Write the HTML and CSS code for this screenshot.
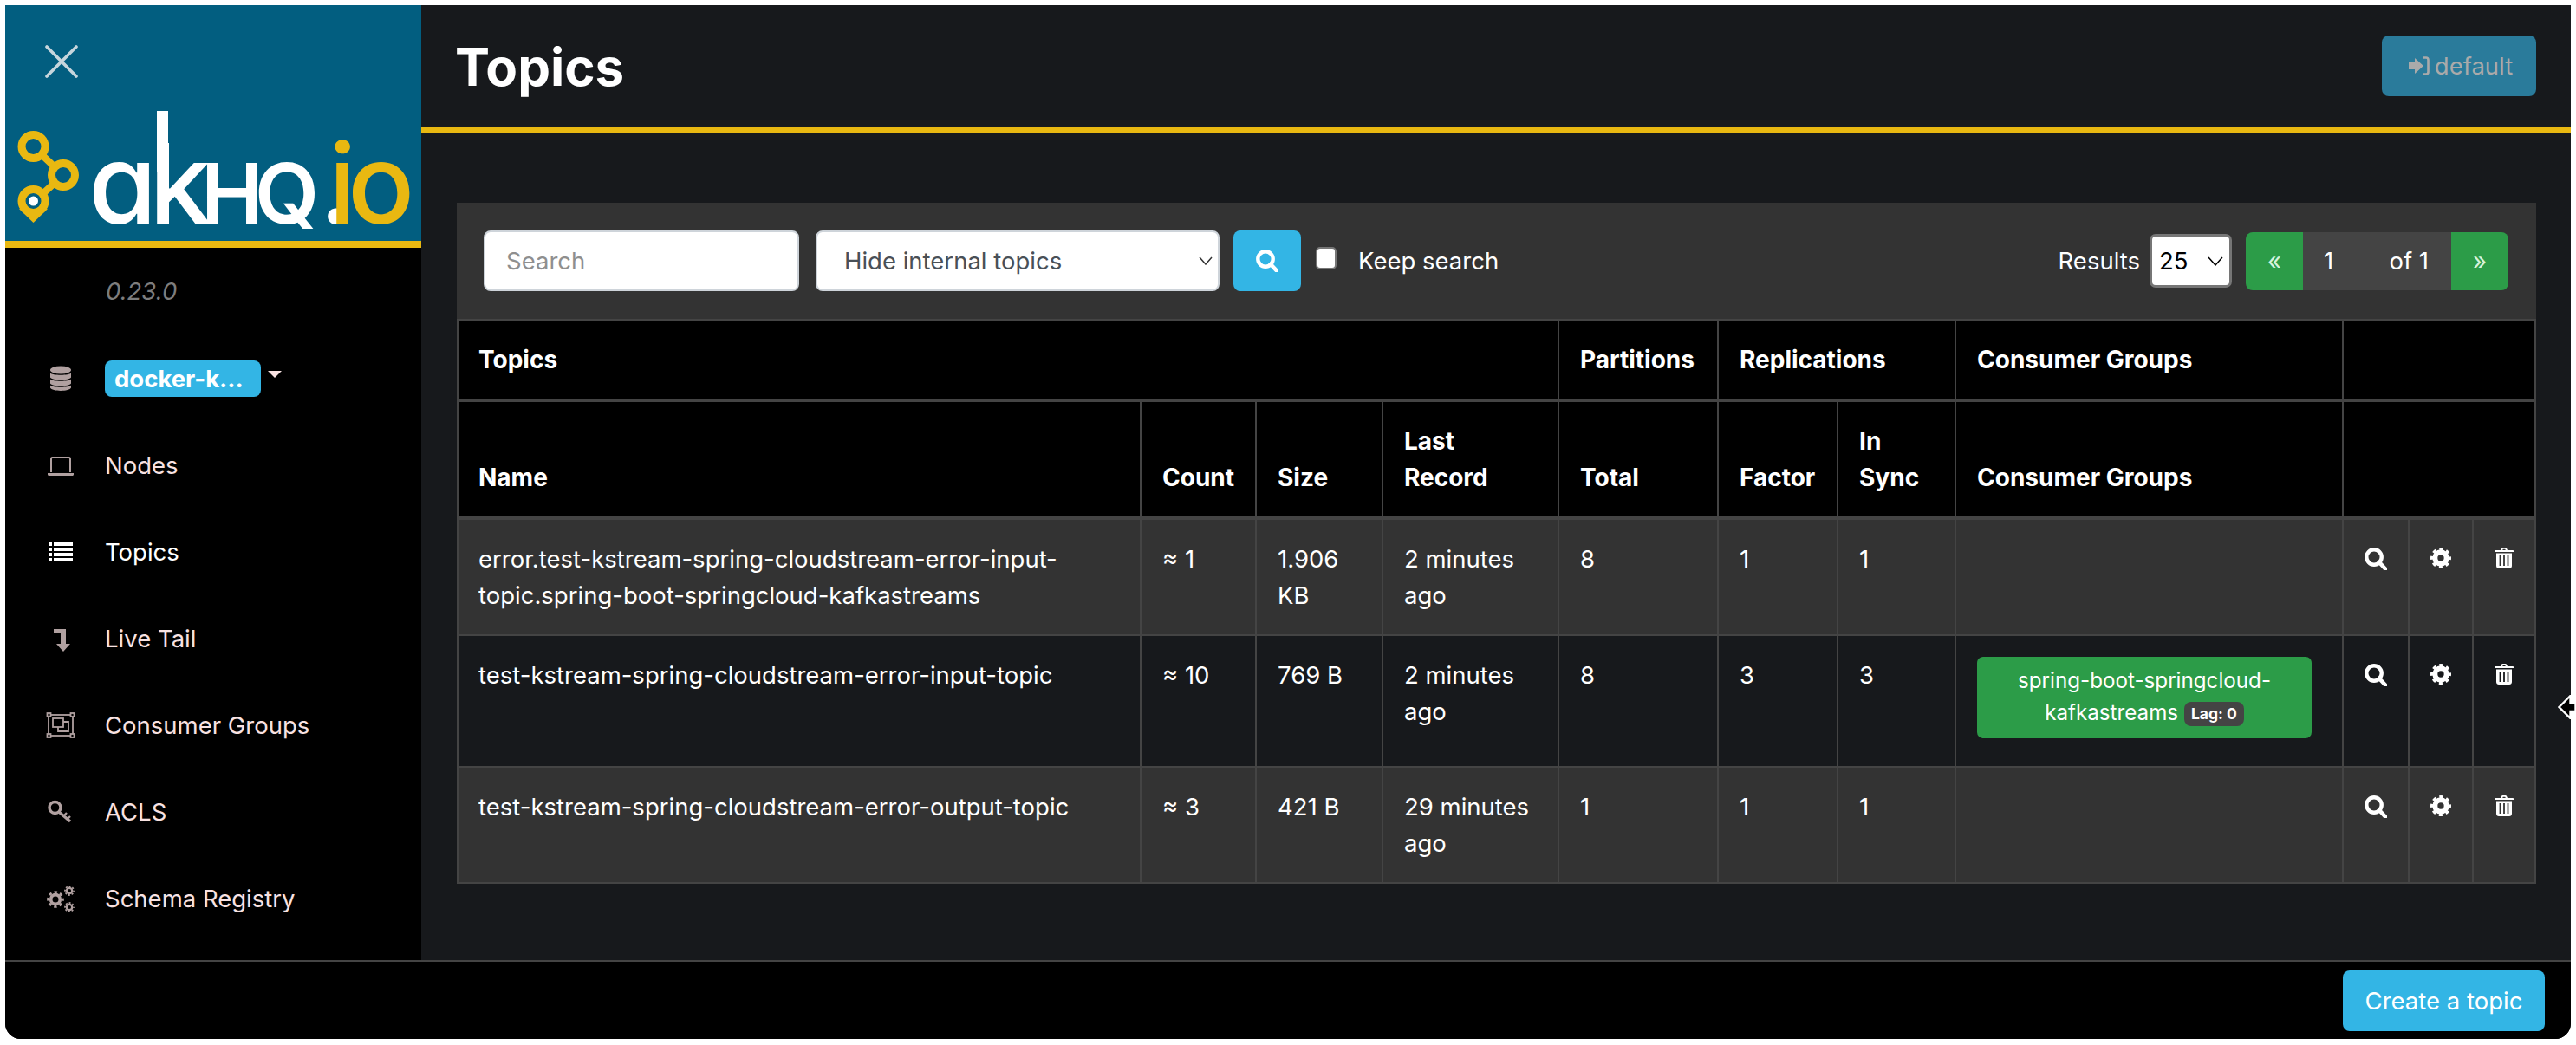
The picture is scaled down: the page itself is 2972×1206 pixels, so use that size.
FILE: index.html
```html
<!DOCTYPE html>
<html lang="en">
<head>
<meta charset="utf-8">
<title>Topics</title>
<link rel="stylesheet" href="styles.css">
</head>
<body>
<svg class="defs" width="0" height="0" aria-hidden="true">
  <symbol id="i-search" viewBox="0 0 26 26"><circle cx="11" cy="11" r="8.7" fill="none" stroke="currentColor" stroke-width="4.4"/><path d="M17 17l7 7.5" fill="none" stroke="currentColor" stroke-width="4.6" stroke-linecap="round"/></symbol>
  <symbol id="i-cog" viewBox="0 0 24 24"><circle cx="12" cy="12" r="6.7" fill="none" stroke="currentColor" stroke-width="6"/><circle cx="12" cy="12" r="10.2" fill="none" stroke="currentColor" stroke-width="3.6" stroke-dasharray="4 4.01" stroke-dashoffset="2"/></symbol>
  <symbol id="i-trash" viewBox="0 0 22 24"><path fill="currentColor" fill-rule="evenodd" d="M7 3l1.2-2.4C8.5.2 9 0 9.4 0h3.2c.4 0 .9.2 1.2.6L15 3h6c.6 0 1 .4 1 1v1H0V4c0-.6.4-1 1-1h6zm2.2 0h3.6l-.6-1.3H9.8L9.2 3zM2 6.500h18V21c0 1.700-1.300 3-3 3H5c-1.700 0-3-1.300-3-3V6.500zM5.600 9v12h1.800V9H5.600zm4.500 0v12h1.800V9h-1.800zm4.500 0v12h1.800V9h-1.800z"/></symbol>
  <symbol id="i-cog-s" viewBox="0 0 12 12"><circle cx="6" cy="6" r="3.2" fill="none" stroke="currentColor" stroke-width="2.200"/><circle cx="6" cy="6" r="5" fill="none" stroke="currentColor" stroke-width="1.800" stroke-dasharray="2 1.930" stroke-dashoffset="1"/></symbol>
</svg>
<div class="app">
  <div class="top">
    <aside class="sidebar">
      <div class="brand">
        <svg class="close" viewBox="0 0 38 38" aria-hidden="true"><path d="M2 2l34 34M36 2L2 36"/></svg>
        <svg class="logo" viewBox="0 -92 480 272" role="img" aria-label="akhq.io">
          <path d="M32 71l35 33M67 104L32 136" fill="none" stroke="#e9b811" stroke-width="8"/>
          <path fill="#e9b811" d="M16 143l16.500 16 16.500-16z"/>
          <g fill="#025e80" stroke="#e9b811" stroke-width="9">
            <circle cx="32.500" cy="71" r="13.500"/>
            <circle cx="67" cy="104" r="13.500"/>
            <circle cx="32.500" cy="134" r="13.500"/>
          </g>
          <circle cx="32.500" cy="134" r="5.500" fill="#fff"/>
          <rect x="175" y="30" width="13" height="70" fill="#fff"/>
          <text class="wordmark" y="160" x="96 166 226 288 362 373 395"><tspan class="wm-low">ak</tspan><tspan class="wm-cap">HQ</tspan><tspan class="wm-low">.</tspan><tspan class="wm-low wm-io">io</tspan></text>
        </svg>
      </div>
      <div class="version">0.23.0</div>
      <nav class="nav">
        <div class="nav-item nav-cluster">
          <svg class="nav-icon" viewBox="0 0 34 34" aria-hidden="true"><g fill="currentColor"><ellipse cx="17" cy="7" rx="12" ry="4.500"/><path d="M5 10.500c2 3 22 3 24 0v5c-2 4-22 4-24 0zM5 17.500c2 3 22 3 24 0v5c-2 4-22 4-24 0zM5 24.500c2 3 22 3 24 0v3c-2 4.500-22 4.500-24 0z"/></g></svg>
          <span class="cluster-badge">docker-k...</span>
          <span class="caret"></span>
        </div>
        <div class="nav-item">
          <svg class="nav-icon" viewBox="0 0 34 34" aria-hidden="true"><path fill="none" stroke="currentColor" stroke-width="2" d="M6 25V9.500C6 8.700 6.700 8 7.500 8h19c.8 0 1.500.7 1.500 1.500V25"/><path fill="currentColor" d="M2 26h30v1.500c0 .8-.7 1.500-1.500 1.500h-27C2.700 29 2 28.300 2 27.500z"/></svg>
          <span>Nodes</span>
        </div>
        <div class="nav-item nav-active">
          <svg class="nav-icon" viewBox="0 0 34 34" aria-hidden="true"><path fill="currentColor" d="M3 6h4v4H3zM9 6h22v4H9zM3 12h4v4H3zM9 12h22v4H9zM3 18h4v4H3zM9 18h22v4H9zM3 24h4v4H3zM9 24h22v4H9z"/></svg>
          <span>Topics</span>
        </div>
        <div class="nav-item">
          <svg class="nav-icon" viewBox="0 0 34 34" aria-hidden="true"><path fill="currentColor" d="M9 6h14v17h5l-8 9-8-9h5V10H9z"/></svg>
          <span>Live Tail</span>
        </div>
        <div class="nav-item">
          <svg class="nav-icon" viewBox="0 0 34 34" aria-hidden="true"><g fill="none" stroke="currentColor" stroke-width="1.800"><rect x="3" y="5" width="28" height="24"/><rect x="1.500" y="3" width="4" height="4" fill="#000"/><rect x="28.500" y="3" width="4" height="4" fill="#000"/><rect x="1.500" y="27" width="4" height="4" fill="#000"/><rect x="28.500" y="27" width="4" height="4" fill="#000"/><rect x="8" y="9" width="12" height="10"/><path d="M20 13h6v11H14v-5"/></g></svg>
          <span>Consumer Groups</span>
        </div>
        <div class="nav-item">
          <svg class="nav-icon" viewBox="0 0 34 34" aria-hidden="true"><circle cx="10.500" cy="12" r="6.500" fill="none" stroke="currentColor" stroke-width="3.400"/><path fill="none" stroke="currentColor" stroke-width="3.400" d="M15 17l13 11"/><path fill="none" stroke="currentColor" stroke-width="2.400" d="M21 21l3-3M25 25l3-3"/></svg>
          <span>ACLS</span>
        </div>
        <div class="nav-item">
          <svg class="nav-icon" viewBox="0 0 34 34" aria-hidden="true"><use href="#i-cog-s" x="1" y="8" width="20" height="20"/><use href="#i-cog-s" x="21" y="2" width="12" height="12"/><use href="#i-cog-s" x="21" y="21" width="12" height="12"/></svg>
          <span>Schema Registry</span>
        </div>
      </nav>
    </aside>
    <main class="main">
      <header class="page-header">
        <h1>Topics</h1>
        <button class="btn-default" type="button">
          <svg class="signin" viewBox="0 0 24 22" aria-hidden="true"><path fill="currentColor" d="M0 7h7V2l10 9-10 9v-5H0z"/><path fill="none" stroke="currentColor" stroke-width="2.600" d="M16 1.500h4c1.500 0 2.500 1 2.500 2.500v14c0 1.500-1 2.500-2.500 2.500h-4"/></svg>
          default
        </button>
      </header>
      <section class="content">
        <div class="toolbar">
          <input class="input-search" type="text" placeholder="Search">
          <select class="select-filter"><option>Hide internal topics</option></select>
          <button class="btn-search" type="button" aria-label="Search"><svg class="icon-search"><use href="#i-search"/></svg></button>
          <input class="check" type="checkbox">
          <span class="check-label">Keep search</span>
          <div class="toolbar-right">
            <span class="results-label">Results</span>
            <select class="select-results"><option>25</option></select>
            <div class="pager">
              <span class="pager-btn">«</span>
              <span class="pager-mid"><span>1</span><span>of 1</span></span>
              <span class="pager-btn">»</span>
            </div>
          </div>
        </div>
        <table class="topics">
          <colgroup>
            <col class="c-name"><col class="c-count"><col class="c-size"><col class="c-last"><col class="c-total"><col class="c-factor"><col class="c-sync"><col class="c-cg"><col class="c-a1"><col class="c-a2"><col class="c-a3">
          </colgroup>
          <thead>
            <tr><th colspan="4">Topics</th><th>Partitions</th><th colspan="2">Replications</th><th>Consumer Groups</th><th colspan="3"></th></tr>
            <tr><th>Name</th><th>Count</th><th>Size</th><th>Last Record</th><th>Total</th><th>Factor</th><th>In Sync</th><th>Consumer Groups</th><th colspan="3"></th></tr>
          </thead>
          <tbody>
            <tr>
              <td>error.test-kstream-spring-cloudstream-error-input-topic.spring-boot-springcloud-kafkastreams</td><td>≈ 1</td><td>1.906 KB</td><td>2 minutes ago</td><td>8</td><td>1</td><td>1</td><td></td>
              <td class="act"><svg class="ico-s"><use href="#i-search"/></svg></td><td class="act"><svg class="ico-c"><use href="#i-cog"/></svg></td><td class="act"><svg class="ico-t"><use href="#i-trash"/></svg></td>
            </tr>
            <tr>
              <td>test-kstream-spring-cloudstream-error-input-topic</td><td>≈ 10</td><td>769 B</td><td>2 minutes ago</td><td>8</td><td>3</td><td>3</td>
              <td><a class="cg-btn">spring-boot-springcloud-kafkastreams <span class="lag">Lag: 0</span></a></td>
              <td class="act"><svg class="ico-s"><use href="#i-search"/></svg></td><td class="act"><svg class="ico-c"><use href="#i-cog"/></svg></td><td class="act"><svg class="ico-t"><use href="#i-trash"/></svg></td>
            </tr>
            <tr>
              <td>test-kstream-spring-cloudstream-error-output-topic</td><td>≈ 3</td><td>421 B</td><td>29 minutes ago</td><td>1</td><td>1</td><td>1</td><td></td>
              <td class="act"><svg class="ico-s"><use href="#i-search"/></svg></td><td class="act"><svg class="ico-c"><use href="#i-cog"/></svg></td><td class="act"><svg class="ico-t"><use href="#i-trash"/></svg></td>
            </tr>
          </tbody>
        </table>
      </section>
    </main>
  </div>
  <footer class="footer">
    <button class="btn-create" type="button">Create a topic</button>
  </footer>
</div>
<svg class="cursor" viewBox="0 0 20 28" aria-hidden="true"><path d="M1 14L14 1v8h6v10h-6v8z" fill="#000" stroke="#fff" stroke-width="2.400"/></svg>
</body>
</html>
```
FILE: styles.css
```css
* { box-sizing: border-box; }
html, body { margin: 0; height: 100%; }
body {
  background: #fff;
  padding: 6px 6px 7px;
  font-family: "Inter", "Liberation Sans", sans-serif;
  font-size: 27.5px;
  line-height: 42px;
  color: #fff;
  overflow: hidden;
  position: relative;
}
.defs { position: absolute; }
.app {
  height: 1193px;
  display: flex;
  flex-direction: column;
  background: #000;
  border-radius: 0 0 18px 18px;
  overflow: hidden;
}
.top { flex: 1; display: flex; min-height: 0; }

/* sidebar */
.sidebar { width: 480px; flex: none; background: #000; }
.brand {
  height: 280px;
  background: #025e80;
  border-bottom: 8px solid #e9b811;
  padding: 46px 0 0 46px;
  position: relative;
}
.close { display: block; width: 38px; height: 38px; position: relative; z-index: 1; }
.close path { fill: none; stroke: #c6d6dd; stroke-width: 3.6; stroke-linecap: round; }
.logo { position: absolute; left: 0; top: 0; width: 480px; height: 272px; }
.wordmark { font-family: "Inter", sans-serif; font-feature-settings: "cv11"; fill: #fff; font-weight: 500; }
.wm-low { font-size: 128px; }
.wm-cap { font-size: 96px; font-weight: 600; }
.wm-io { fill: #e9b811; }
.version {
  height: 101px;
  padding: 29px 0 0 116px;
  font-style: italic;
  color: #7d7d7d;
}
.nav-item {
  height: 100px;
  display: flex;
  align-items: center;
  padding-left: 47px;
  padding-bottom: 1px;
  color: #f8e2e2;
}
.nav-icon { width: 34px; height: 34px; margin-right: 34px; color: #b0a0a0; flex: none; }
.nav-active, .nav-active .nav-icon { color: #fff; }
.nav-cluster { padding-bottom: 0; }
.cluster-badge {
  width: 180px;
  height: 42px;
  background: #33b5e5;
  border-radius: 8px;
  color: #fff;
  font-weight: 700;
  padding-left: 11px;
  line-height: 42px;
}
.caret {
  margin: -10px 0 0 8px;
  border-top: 8px solid #f8e2e2;
  border-left: 8px solid transparent;
  border-right: 8px solid transparent;
}

/* main */
.main { flex: 1; min-width: 0; background: #17191c; display: flex; flex-direction: column; }
.page-header {
  height: 148px;
  flex: none;
  border-bottom: 8px solid #e9b811;
  display: flex;
  justify-content: space-between;
  padding: 35px 40px 0 39px;
}
.page-header h1 { margin: 0; font-size: 60px; line-height: 72px; font-weight: 700; }
.btn-default {
  width: 178px;
  height: 70px;
  border: 0;
  border-radius: 8px;
  background: #2a7b9b;
  color: #aaa;
  font: inherit;
  display: flex;
  align-items: center;
  justify-content: center;
  gap: 6px;
  padding: 0 0 0 4px;
}
.signin { width: 24px; height: 22px; }
.content { padding: 80px 40px 0 41px; }
.toolbar {
  height: 134px;
  background: #333;
  display: flex;
  align-items: center;
  padding: 0 32px 0 31px;
}
.input-search {
  width: 364px;
  height: 70px;
  border: 2px solid #ced4da;
  border-radius: 8px;
  background: #fff;
  padding: 0 24px;
  font: inherit;
}
.input-search::placeholder { color: #8f8f8f; opacity: 1; }
.select-filter {
  width: 466px;
  height: 70px;
  margin-left: 19px;
  border: 2px solid #ced4da;
  border-radius: 8px;
  padding: 0 31px;
  font: inherit;
  color: #495057;
  appearance: none;
  background: #fff url("data:image/svg+xml,%3Csvg xmlns='http://www.w3.org/2000/svg' width='16' height='10'%3E%3Cpath d='M1 1l7 8 7-8' fill='none' stroke='%23333' stroke-width='1.500'/%3E%3C/svg%3E") no-repeat right 6px center;
}
.btn-search {
  width: 78px;
  height: 70px;
  margin-left: 16px;
  border: 0;
  border-radius: 8px;
  background: #33b5e5;
  color: #fff;
  display: flex;
  align-items: center;
  justify-content: center;
  padding: 0;
}
.icon-search { width: 26px; height: 26px; }
.check {
  width: 24px;
  height: 26px;
  margin: -6px 0 0 17px;
  appearance: none;
  background: #fff;
  border: 2px solid #767676;
  border-radius: 5px;
}
.check-label { margin-left: 25px; }
.toolbar-right { margin-left: auto; display: flex; align-items: center; }
.results-label { margin-right: 11px; }
.select-results {
  width: 95px;
  height: 62px;
  border: 3px solid #767676;
  border-radius: 7px;
  padding: 0 8px;
  font: inherit;
  color: #000;
  appearance: none;
  background: #fff url("data:image/svg+xml,%3Csvg xmlns='http://www.w3.org/2000/svg' width='18' height='11'%3E%3Cpath d='M1 1l8 9 8-9' fill='none' stroke='%23000' stroke-width='1.500'/%3E%3C/svg%3E") no-repeat right 7px center;
}
.pager { margin-left: 16px; width: 303px; height: 67px; display: flex; border-radius: 8px; overflow: hidden; }
.pager-btn { width: 66px; background: #2c9c48; color: #d6f3dd; display: flex; align-items: center; justify-content: center; }
.pager-mid { flex: 1; background: #444; display: flex; justify-content: space-between; align-items: center; padding: 0 26px 0 24px; }

/* table */
.topics { width: 2397px; table-layout: fixed; border-collapse: collapse; }
.c-name { width: 788px; }
.c-count { width: 133px; }
.c-size { width: 146px; }
.c-last { width: 203px; }
.c-total { width: 184px; }
.c-factor { width: 138px; }
.c-sync { width: 136px; }
.c-cg { width: 447px; }
.c-a1 { width: 76px; }
.c-a2 { width: 74px; }
.c-a3 { width: 72px; }
.topics th, .topics td {
  border: 2px solid #444;
  padding: 24px;
  text-align: left;
  vertical-align: top;
  line-height: 42px;
}
.topics th:first-child, .topics td:first-child { padding-left: 23px; }
.topics th { background: #000; font-weight: 700; font-size: 28px; vertical-align: bottom; }
.topics thead tr:first-child th { border-bottom-width: 4px; }
.topics thead tr:last-child th { border-bottom-width: 4px; }
.topics tbody tr:nth-child(odd) td { background: #333; }
.topics tbody tr:nth-child(even) td { background: #17191c; }
.topics td.act { padding: 32px 0 0; text-align: center; line-height: 0; }
.ico-s { width: 26px; height: 26px; }
.ico-c { width: 24px; height: 24px; }
.ico-t { width: 22px; height: 24px; }
.cg-btn {
  display: block;
  background: #2c9c48;
  border-radius: 7px;
  margin: 0 11px 8px 0;
  padding: 10px 14px;
  text-align: center;
  font-size: 24.200px;
  line-height: 36.750px;
}
.lag {
  display: inline-block;
  background: #444;
  border-radius: 8px;
  font-size: 17.500px;
  line-height: 28px;
  font-weight: 700;
  padding: 0 8px;
  vertical-align: 1px;
}

/* footer */
.footer {
  height: 91px;
  flex: none;
  border-top: 2px solid #444;
  background: #000;
  display: flex;
  justify-content: flex-end;
  padding: 10px 30px 0 0;
}
.btn-create {
  width: 233px;
  height: 70px;
  border: 0;
  border-radius: 8px;
  background: #33b5e5;
  color: #fff;
  font: inherit;
}
.cursor { position: absolute; left: 2951px; top: 802px; width: 21px; height: 28px; }
```
